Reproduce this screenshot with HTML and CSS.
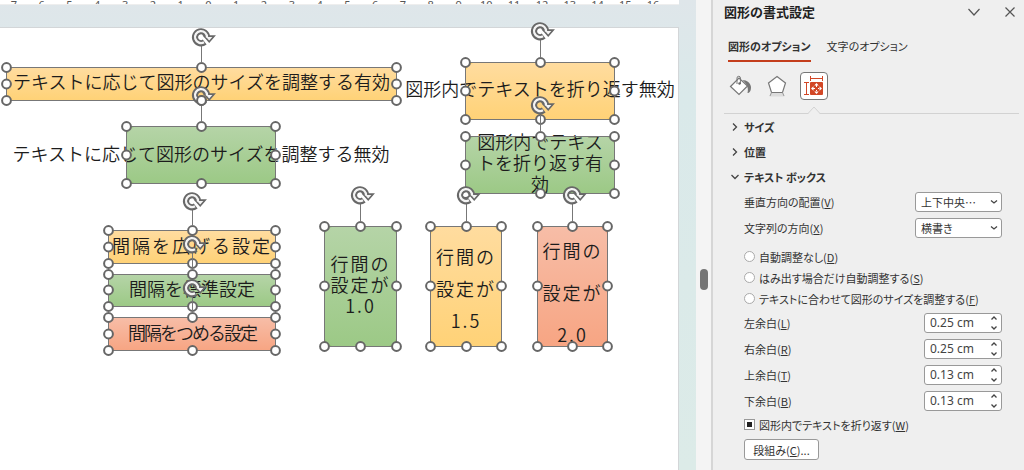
FILE: index.html
```html
<!DOCTYPE html>
<html lang="ja">
<head>
<meta charset="utf-8">
<title>図形の書式設定</title>
<link rel="stylesheet" href="styles.css">
</head>
<body>
<div class="app">
  <main class="workspace">
    <div class="ruler">
      <span>7</span><span>6</span><span>5</span><span>4</span><span>3</span><span>2</span><span>1</span><span>0</span><span>1</span><span>2</span><span>3</span><span>4</span><span>5</span><span>6</span><span>7</span><span>8</span><span>9</span><span>10</span><span>11</span><span>12</span><span>13</span><span>14</span><span>15</span><span>16</span>
    </div>
    <div class="slide"></div>
    <div class="canvas">
      <div class="shape yellow s-fit">テキストに応じて図形のサイズを調整する有効</div>
      <div class="shape green round s-nofit">テキストに応じて図形のサイズを調整する無効</div>
      <div class="shape yellow round s-nowrap">図形内でテキストを折り返す無効</div>
      <div class="shape green round s-wrap">図形内でテキス<br>トを折り返す有<br>効</div>
      <div class="shape yellow wide s-wide">間隔を広げる設定</div>
      <div class="shape green s-normal">間隔を標準設定</div>
      <div class="shape red tight s-tight">間隔をつめる設定</div>
      <div class="shape green round wide s-line1">行間の<br>設定が<br>1.0</div>
      <div class="shape yellow round wide s-line15">行間の<br>設定が<br>1.5</div>
      <div class="shape red round wide s-line2">行間の<br>設定が<br>2.0</div>
      <svg class="selection" width="696" height="470" viewBox="0 0 696 470" aria-hidden="true">
        <defs>
          <marker id="handle" markerUnits="userSpaceOnUse" markerWidth="14" markerHeight="14" refX="7" refY="7">
            <circle cx="7" cy="7" r="4.4" fill="#fff" stroke="#666" stroke-width="2"/>
          </marker>
          <g id="rotate">
            <path d="M6 0A6 6 0 1 0 3.7 5" fill="none" stroke="#686868" stroke-width="6.2"/>
            <path d="M3.2 -.9H13.200L8.200 4.800Z" fill="#f4f4f4" stroke="#686868" stroke-width="1.6"/>
            <path d="M6 .6A6 6 0 1 0 3 5.300" fill="none" stroke="#f4f4f4" stroke-width="2.300"/>
          </g>
        </defs>
        <g class="frames">
          <path d="M6.5 67.5H201.5H396.5V84V100.5H201.5H6.5V84Z"/>
          <path d="M126.5 126.5H201.5H275.5V155V183.5H201.5H126.5V155Z"/>
          <path d="M465.5 62.5H540.5H614.5V91V119.5H540.5H465.5V91Z"/>
          <path d="M465.5 136.5H540.5H614.5V165V193.5H540.5H465.5V165Z"/>
          <path d="M108.5 230.5H192.5H275.5V247V263.5H192.5H108.5V247Z"/>
          <path d="M108.5 274.5H192.5H275.5V290V306.5H192.5H108.5V290Z"/>
          <path d="M108.5 317.5H192.5H275.5V334V350.5H192.5H108.5V334Z"/>
          <path d="M324.5 226.5H360.5H396.5V286V346.5H360.5H324.5V286Z"/>
          <path d="M430.5 226.5H466.5H501.5V286V346.5H466.5H430.5V286Z"/>
          <path d="M537.5 226.5H572.5H607.5V286V346.5H572.5H537.5V286Z"/>
        </g>
        <path class="stems" d="M201.5 45V63M201.5 105V122M540.5 39V58M540.5 115V132M192.5 209V226M192.5 252V270M192.5 296V313M360.5 203V222M466.5 203V222M572.5 203V222"/>
        <use href="#rotate" x="201" y="37"/>
        <use href="#rotate" x="201" y="95"/>
        <use href="#rotate" x="540" y="31"/>
        <use href="#rotate" x="540" y="105"/>
        <use href="#rotate" x="192" y="201"/>
        <use href="#rotate" x="192" y="244"/>
        <use href="#rotate" x="192" y="288"/>
        <use href="#rotate" x="360" y="195"/>
        <use href="#rotate" x="466" y="195"/>
        <use href="#rotate" x="572" y="195"/>
        <circle cx="201.5" cy="100.5" r="4.4" fill="#fff" stroke="#666" stroke-width="2"/>
      </svg>
    </div>
  </main>

  <div class="scrollbar"><div class="thumb"></div></div>

  <aside class="panel">
    <header class="panel-head">
      <h1>図形の書式設定</h1>
      <button class="plain" type="button" aria-label="作業ウィンドウ オプション"><svg width="14" height="14" viewBox="0 0 14 14"><path d="M1.5 4L7 10L12.5 4" fill="none" stroke="#555" stroke-width="1.2"/></svg></button>
      <button class="plain" type="button" aria-label="閉じる"><svg width="14" height="14" viewBox="0 0 14 14"><path d="M2.5 2.5L11.5 11.5M11.5 2.5L2.5 11.5" fill="none" stroke="#555" stroke-width="1.2"/></svg></button>
    </header>
    <nav class="tabs">
      <button class="tab active" type="button">図形のオプション</button>
      <button class="tab" type="button">文字のオプション</button>
    </nav>
    <div class="tools">
      <button class="tool" type="button" aria-label="塗りつぶしと線"><svg width="24" height="24" viewBox="0 0 24 24"><path d="M2.5 12.5L11 4L19.5 12L11 20.5Z" fill="#fff" stroke="#777" stroke-width="1.2"/><path d="M9 10V4A1.700 1.700 0 0 1 12.400 4V10" fill="none" stroke="#777"/><circle cx="11.500" cy="9.500" r="1.200" fill="#666"/><path d="M14.500 6C19 6 22.500 9 23 13C23 16.500 22 19 19.500 19C20.500 15 20 11 14.500 6Z" fill="#777"/></svg></button>
      <button class="tool" type="button" aria-label="効果"><svg width="24" height="24" viewBox="0 0 24 24"><path d="M6 19H18L19.500 22.500H4.500Z" fill="#dcdcdc"/><path d="M12 2.5L20.5 9L17.5 18.5H6.5L3.5 9Z" fill="#fff" stroke="#777" stroke-width="1.2"/><path d="M6.5 18.5L5 22M17.5 18.5L19 22" stroke="#999"/></svg></button>
      <button class="tool selected" type="button" aria-label="サイズとプロパティ"><svg width="24" height="24" viewBox="0 0 24 24"><path d="M8.5 4.5H20.500M8.5 2V7M20.500 2V7M4.5 8.500V20.500M2 8.500H7M2 20.500H7" fill="none" stroke="#d24726"/><rect x="8" y="8" width="13" height="13" rx="1" fill="#d24726"/><path d="M14.500 9L16.700 11.500H12.300ZM14.500 20L16.700 17.500H12.300ZM9 14.500L11.500 12.300V16.700ZM20 14.500L17.500 12.300V16.700ZM14 11H15V13H14ZM14 16H15V18H14ZM11 14H13V15H11ZM16 14H18V15H16Z" fill="#fff"/></svg></button>
    </div>
    <div class="divider"><svg width="12" height="8" viewBox="0 0 12 8"><path d="M0 8L6 1L12 8Z" fill="#efefef"/><path d="M0 7.5L6 1L12 7.5" fill="none" stroke="#d2d2d2"/></svg></div>

    <section class="sections">
      <button class="section" type="button"><svg width="8" height="8" viewBox="0 0 8 8"><path d="M2 0.5L5.5 4L2 7.5"/></svg>サイズ</button>
      <button class="section" type="button"><svg width="8" height="8" viewBox="0 0 8 8"><path d="M2 0.5L5.5 4L2 7.5"/></svg>位置</button>
      <button class="section" type="button" aria-expanded="true"><svg width="8" height="8" viewBox="0 0 8 8"><path d="M0.5 2L4 5.5L7.5 2"/></svg>テキスト ボックス</button>
    </section>

    <form class="form">
      <div class="row">
        <label for="valign">垂直方向の配置(<u>V</u>)</label>
        <span class="field select"><select id="valign"><option>上下中央…</option></select><svg width="8" height="8" viewBox="0 0 8 8"><path d="M1 2.5L4 5L7 2.5"/></svg></span>
      </div>
      <div class="row">
        <label for="dir">文字列の方向(<u>X</u>)</label>
        <span class="field select"><select id="dir"><option>横書き</option></select><svg width="8" height="8" viewBox="0 0 8 8"><path d="M1 2.5L4 5L7 2.5"/></svg></span>
      </div>
      <div class="radios">
        <label><input type="radio" name="fit">自動調整なし(<u>D</u>)</label>
        <label><input type="radio" name="fit">はみ出す場合だけ自動調整する(<u>S</u>)</label>
        <label><input type="radio" name="fit">テキストに合わせて図形のサイズを調整する(<u>F</u>)</label>
      </div>
      <div class="row">
        <label for="ml">左余白(<u>L</u>)</label>
        <span class="field spin"><input id="ml" type="text" value="0.25 cm"><svg width="8" height="16" viewBox="0 0 8 16"><path d="M1.5 4.5L4 2L6.5 4.5M1.5 11.5L4 14L6.5 11.5"/></svg></span>
      </div>
      <div class="row">
        <label for="mr">右余白(<u>R</u>)</label>
        <span class="field spin"><input id="mr" type="text" value="0.25 cm"><svg width="8" height="16" viewBox="0 0 8 16"><path d="M1.5 4.5L4 2L6.5 4.5M1.5 11.5L4 14L6.5 11.5"/></svg></span>
      </div>
      <div class="row">
        <label for="mt">上余白(<u>T</u>)</label>
        <span class="field spin"><input id="mt" type="text" value="0.13 cm"><svg width="8" height="16" viewBox="0 0 8 16"><path d="M1.5 4.5L4 2L6.5 4.5M1.5 11.5L4 14L6.5 11.5"/></svg></span>
      </div>
      <div class="row">
        <label for="mb">下余白(<u>B</u>)</label>
        <span class="field spin"><input id="mb" type="text" value="0.13 cm"><svg width="8" height="16" viewBox="0 0 8 16"><path d="M1.5 4.5L4 2L6.5 4.5M1.5 11.5L4 14L6.5 11.5"/></svg></span>
      </div>
      <label class="check"><input type="checkbox" checked>図形内でテキストを折り返す(<u>W</u>)</label>
      <button class="columns" type="button">段組み(<u>C</u>)...</button>
    </form>
  </aside>
</div>
</body>
</html>
```
FILE: styles.css
```css
* { box-sizing: border-box; }
body { margin: 0; font-family: "Noto Sans CJK JP", sans-serif; font-size: 11px; color: #333; }
button, input, select { font: inherit; color: inherit; margin: 0; }
button { padding: 0; border: 0; background: none; font-feature-settings: "palt"; }
svg { display: block; }

.app { display: flex; height: 100vh; overflow: hidden; }
.workspace {
  position: relative; flex: 1; min-width: 0; overflow: hidden;
  display: flex; flex-direction: column;
  background: linear-gradient(#dfe6ea, #dae9ea 20%, #dcebe8);
}
.ruler {
  display: grid; grid-template-columns: repeat(24, 1fr); align-items: end;
  height: 5px; margin-right: 17px; padding-right: 12px; overflow: hidden;
  background: #fff; border-bottom: 1px solid #eee;
  font: 11px/10px "Noto Sans", sans-serif; color: #555; text-align: center;
}
.slide { flex: 1; margin: 22px 17px 0 0; background: #fff; border: solid #d3d6d8; border-width: 1px 1px 0 0; }

.canvas, .selection { position: absolute; left: 0; top: 0; }
.frames path { fill: none; stroke: #777; marker-start: url(#handle); marker-mid: url(#handle); }
.stems { stroke: #777; fill: none; }

.shape {
  position: absolute; display: flex; align-items: center; justify-content: center;
  padding-bottom: 4px; border: 1px solid; text-align: center; white-space: nowrap;
  font-size: 18px; line-height: 21px; font-weight: 350; color: #1c1c1c;
}
.yellow { background: linear-gradient(#ffdc9f, #ffd277); border-color: #f5b800; }
.green { background: linear-gradient(#b5d4a7, #9cc986); border-color: #70ad47; }
.red { background: linear-gradient(#f7bda7, #f7a583); border-color: #ed7d31; }
.round { border-radius: 8px; }
.wide { letter-spacing: 2px; }
.tight { letter-spacing: -2px; }
.s-fit { left: 6px; top: 67px; width: 391px; height: 34px; padding-bottom: 6px; }
.s-nofit { left: 126px; top: 126px; width: 150px; height: 58px; }
.s-nowrap { left: 465px; top: 62px; width: 150px; height: 58px; padding-bottom: 6px; }
.s-wrap { left: 465px; top: 136px; width: 150px; height: 58px; padding-bottom: 6px; }
.s-wide { left: 108px; top: 230px; width: 168px; height: 34px; }
.s-normal { left: 108px; top: 274px; width: 168px; height: 33px; }
.s-tight { left: 108px; top: 317px; width: 168px; height: 34px; }
.s-line1 { left: 324px; top: 226px; width: 73px; height: 121px; }
.s-line15 { left: 430px; top: 226px; width: 72px; height: 121px; line-height: 32px; padding-top: 6px; }
.s-line2 { left: 537px; top: 226px; width: 71px; height: 121px; line-height: 42px; padding-top: 14px; }

.scrollbar { width: 15px; padding: 269px 3px 0 4px; background: #f4f4f4; }
.thumb { height: 21px; border-radius: 4px; background: #757575; }

.panel { width: 313px; flex: none; background: #efefef; border-left: 2px solid #d6d6d6; display: flex; flex-direction: column; }
.panel-head { display: flex; align-items: center; gap: 22px; height: 24px; padding: 0 7px 0 11px; }
.panel-head h1 { flex: 1; margin: 0; font-size: 13px; line-height: 24px; font-weight: 700; color: #222; }
.tabs { display: flex; gap: 16px; margin: 12px 0 0 15px; }
.tab { height: 26px; padding-bottom: 4px; border-bottom: 2px solid transparent; line-height: 20px; }
.tab.active { font-weight: 700; border-color: #c43e1c; }
.tools { display: flex; gap: 9px; margin: 10px 0 0 13px; }
.tool { width: 28px; height: 28px; display: flex; align-items: center; justify-content: center; border: 1px solid transparent; border-radius: 4px; }
.tool.selected { background: #fff; border-color: #777; }
.divider { height: 14px; margin: 0 5px 0 11px; padding: 6px 0 0 84px; border-bottom: 1px solid #d2d2d2; }
.sections { display: flex; flex-direction: column; margin: 0 0 0 18px; }
.section { display: flex; align-items: center; gap: 5px; height: 25px; font-weight: 700; }
.section path, .field path { fill: none; stroke: #444; stroke-width: 1.3; }

.form { padding: 0 22px 0 31px; font-feature-settings: "palt"; }
.row { display: flex; align-items: center; justify-content: space-between; height: 26px; }
.field { position: relative; display: block; }
.field svg { position: absolute; right: 4px; top: 6px; }
.field select, .field input { display: block; width: 100%; height: 20px; border: 1px solid #999; border-radius: 3px; background: #fff; padding: 0 5px; appearance: none; }
.select { width: 87px; }
.spin { width: 78px; }
.field.spin svg { top: 2px; }
.field.spin input { font-family: "Noto Sans", sans-serif; font-size: 12px; padding-bottom: 2px; color: #444; }
.radios { display: flex; flex-direction: column; margin: 5px 0 1px; }
.radios label, .check { display: flex; align-items: center; height: 21px; white-space: nowrap; }
.radios input { appearance: none; width: 11px; height: 11px; margin-right: 4px; border: 1px solid #aaa; border-radius: 50%; background: #fff; }
.check input { appearance: none; width: 11px; height: 11px; margin-right: 4px; border: 1px solid #999; background: linear-gradient(#222, #222) center / 5px 5px no-repeat #fff; }
.columns { display: block; width: 75px; height: 21px; margin-top: 4px; border: 1px solid #999; border-radius: 3px; background: #fff; }
```
